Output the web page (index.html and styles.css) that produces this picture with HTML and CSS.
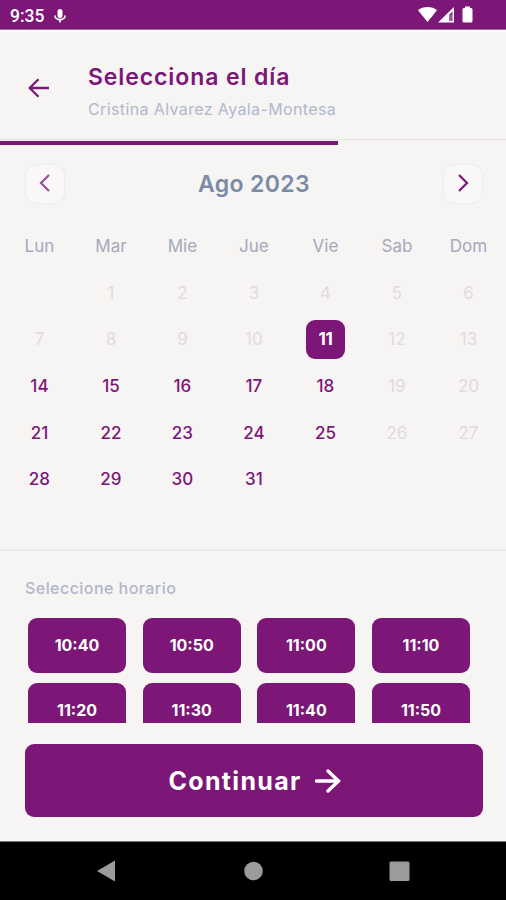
FILE: index.html
```html
<!DOCTYPE html>
<html lang="es">
<head>
    <meta charset="UTF-8">
    <meta name="viewport" content="width=device-width, initial-scale=1.0">
    <title>Selecciona el día</title>
    <link rel="stylesheet" href="styles.css">
</head>
<body>
    <div class="status-bar">
        <span class="clock">9:35</span>
        <svg class="mic" width="12" height="14" viewBox="0 0 12 14">
            <rect x="3.5" y="0" width="5" height="9" rx="2.5" fill="#fff"/>
            <path d="M1 6.500c0 5.500 10 5.500 10 0M6 10v3.500" fill="none" stroke="#fff" stroke-width="1.700"/>
        </svg>
        <svg class="signals" width="56" height="18" viewBox="0 0 56 18">
            <path d="M0 4.200C5 0 14 0 19 4.200L9.500 16z" fill="#fff"/>
            <path d="M36 1v15.500H20zM31.300 15V8.500L34.500 5.500V15z" fill="#fff" fill-rule="evenodd"/>
            <path d="M33 8.500V15" stroke="#fff" stroke-width=".6"/>
            <path d="M47 0.500h5v1.500h1q1.500 0 1.500 1.500v11.500q0 1.500-1.500 1.500h-7q-1.500 0-1.500-1.500v-11.500q0-1.500 1.500-1.500h1z" fill="#fff"/>
        </svg>
    </div>

    <header class="header">
        <svg class="back" width="22" height="20" viewBox="0 0 22 20">
            <path d="M21 10H2M10.500 1.200L1.700 10l8.800 8.800" fill="none" stroke="#7c1778" stroke-width="2.300"/>
        </svg>
        <div class="heading">
            <h1>Selecciona el día</h1>
            <p>Cristina Alvarez Ayala-Montesa</p>
        </div>
    </header>
    <div class="progress-bar">
        <div class="progress"></div>
    </div>

    <main class="calendar">
        <div class="month-nav">
            <button class="month-button disabled">
                <svg width="12" height="18" viewBox="0 0 12 18"><path d="M10 1L2 9l8 8" fill="none" stroke="#7c1778" stroke-width="2.200"/></svg>
            </button>
            <h2>Ago 2023</h2>
            <button class="month-button">
                <svg width="12" height="18" viewBox="0 0 12 18"><path d="M2 1L10 9l-8 8" fill="none" stroke="#7c1778" stroke-width="2.200"/></svg>
            </button>
        </div>
        <div class="days">
            <span class="weekday">Lun</span>
            <span class="weekday">Mar</span>
            <span class="weekday">Mie</span>
            <span class="weekday">Jue</span>
            <span class="weekday">Vie</span>
            <span class="weekday">Sab</span>
            <span class="weekday">Dom</span>
            <span></span>
            <span>1</span>
            <span>2</span>
            <span>3</span>
            <span>4</span>
            <span>5</span>
            <span>6</span>
            <span>7</span>
            <span>8</span>
            <span>9</span>
            <span>10</span>
            <span class="selected">11</span>
            <span>12</span>
            <span>13</span>
            <span class="open">14</span>
            <span class="open">15</span>
            <span class="open">16</span>
            <span class="open">17</span>
            <span class="open">18</span>
            <span>19</span>
            <span>20</span>
            <span class="open">21</span>
            <span class="open">22</span>
            <span class="open">23</span>
            <span class="open">24</span>
            <span class="open">25</span>
            <span>26</span>
            <span>27</span>
            <span class="open">28</span>
            <span class="open">29</span>
            <span class="open">30</span>
            <span class="open">31</span>
        </div>
    </main>

    <section class="schedule">
        <h3>Seleccione horario</h3>
        <div class="slots">
            <button class="slot">10:40</button>
            <button class="slot">10:50</button>
            <button class="slot">11:00</button>
            <button class="slot">11:10</button>
            <button class="slot">11:20</button>
            <button class="slot">11:30</button>
            <button class="slot">11:40</button>
            <button class="slot">11:50</button>
        </div>
        <button class="continue">
            <span>Continuar</span>
            <svg width="26" height="24" viewBox="0 0 26 24">
                <path d="M1.500 12h22M13 2l10.500 10L13 22" fill="none" stroke="#fff" stroke-width="3.400" stroke-linecap="round"/>
            </svg>
        </button>
    </section>

    <nav class="system-nav">
        <svg width="506" height="58" viewBox="0 0 506 58">
            <path d="M97 29l18-10.500v21z" fill="#9b9b9b"/>
            <circle cx="253.500" cy="29" r="9.300" fill="#9b9b9b"/>
            <rect x="389.500" y="19.500" width="20" height="19.500" rx="1.500" fill="#9b9b9b"/>
        </svg>
    </nav>
</body>
</html>
```
FILE: styles.css
```css
* {
    box-sizing: border-box;
}
body {
    margin: 0;
    width: 506px;
    height: 900px;
    display: flex;
    flex-direction: column;
    overflow: hidden;
    background: #f7f4f4;
    font-family: Inter, sans-serif;
}
h1, h2, h3, p {
    margin: 0;
}
button {
    padding: 0;
    border: none;
    font-family: inherit;
}
.status-bar {
    height: 30px;
    flex: none;
    display: flex;
    align-items: center;
    padding: 2px 32px 0 10px;
    background: #7c1778;
    color: #fff;
    border-bottom: 1px solid #a968a6;
}
.clock {
    width: 44px;
    font: 500 17.5px/28px Roboto, sans-serif;
}
.signals {
    margin-left: auto;
    margin-bottom: 1px;
}
.header {
    height: 109px;
    flex: none;
    display: flex;
    border-top: 2px solid #fff;
    padding: 30px 0 0 28px;
}
.back {
    margin-top: 16px;
}
.heading {
    margin-left: 38px;
}
.heading h1 {
    color: #7c1778;
    font-size: 23px;
    font-weight: 600;
    line-height: 30px;
    letter-spacing: 0.9px;
    white-space: nowrap;
}
.heading p {
    margin-top: 6px;
    color: #b0b9cc;
    font-size: 16px;
    line-height: 22px;
    letter-spacing: 0.38px;
    white-space: nowrap;
}
.progress-bar {
    height: 7px;
    flex: none;
    padding-top: 1px;
    border-top: 1px solid #e6e2e3;
}
.progress {
    width: 338px;
    height: 4px;
    background: #7c1778;
}
.calendar {
    height: 403px;
    flex: none;
    padding-top: 18px;
}
.month-nav {
    display: flex;
    justify-content: space-between;
    padding: 0 23px 0 25px;
}
.month-nav h2 {
    padding-top: 1px;
    color: #7a8ba6;
    font-size: 23px;
    font-weight: 600;
    line-height: 39px;
    letter-spacing: 0.4px;
}
.month-button {
    width: 40px;
    height: 40px;
    padding-bottom: 3px;
    display: flex;
    align-items: center;
    justify-content: center;
    background: #f9f7f7;
    border: 1px solid #eeebec;
    border-radius: 11px;
}
.month-button.disabled svg {
    opacity: 0.75;
}
.days {
    display: grid;
    grid-template-columns: repeat(7, 71.5px);
    grid-auto-rows: 46.7px;
    align-items: center;
    justify-items: center;
    padding: 18.5px 0 0 3.7px;
    color: #dfdbde;
    font-size: 17px;
}
.weekday {
    color: #a4a9ba;
}
.open {
    color: #7c1778;
    font-weight: 500;
}
.selected {
    width: 39px;
    height: 39px;
    background: #7c1778;
    border-radius: 9px;
    color: #fff;
    font-weight: 700;
    line-height: 39px;
    letter-spacing: -0.5px;
    text-align: center;
}
.schedule {
    height: 292px;
    flex: none;
    padding: 25px 23px 0 25px;
    border-top: 2px solid #ece9ea;
}
.schedule h3 {
    color: #b0b7ca;
    font-size: 16px;
    font-weight: 500;
    line-height: 24px;
    letter-spacing: 0.45px;
}
.slots {
    height: 105px;
    margin-top: 18px;
    padding: 0 13px 0 3px;
    display: grid;
    grid-template-columns: repeat(4, 98px);
    grid-auto-rows: 55px;
    justify-content: space-between;
    row-gap: 10px;
    overflow: hidden;
}
.slot {
    padding-bottom: 1px;
    background: #7c1778;
    border-radius: 9px;
    color: #fff;
    font-size: 16px;
    font-weight: 700;
}
.continue {
    width: 458px;
    height: 73px;
    margin-top: 21px;
    padding-left: 2px;
    display: flex;
    align-items: center;
    justify-content: center;
    gap: 14px;
    background: #7c1778;
    border-radius: 9px;
    color: #fff;
    font-size: 25px;
    font-weight: 700;
    letter-spacing: 1.3px;
}
.system-nav {
    height: 59px;
    flex: none;
    background: #000;
    border-top: 1px solid #777;
}
```
